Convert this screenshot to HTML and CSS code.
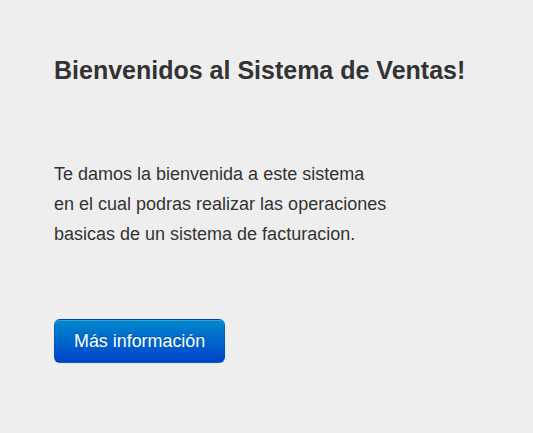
FILE: index.html
```html
<!DOCTYPE html>
<html lang="es">
<head>
<meta charset="utf-8">
<title>Sistema de Ventas</title>
<link rel="stylesheet" href="styles.css">
</head>
<body>
<div class="hero">
  <h1 class="hero-title">Bienvenidos al Sistema de Ventas!</h1>
  <p class="hero-text">Te damos la bienvenida a este sistema<br>en el cual podras realizar las operaciones<br>basicas de un sistema de facturacion.</p>
  <a class="btn-primary" href="#">Más información</a>
</div>
</body>
</html>
```
FILE: styles.css
```css
html, body {
  margin: 0;
  padding: 0;
  background: #eeeeee;
  height: 100%;
}
body {
  font-family: "Liberation Sans", Arial, sans-serif;
  color: #333333;
}
.hero {
  padding: 55px 20px 0 54px;
}
.hero-title {
  margin: 0 0 74px;
  font-size: 25px;
  line-height: 30px;
  font-weight: bold;
  color: #333333;
}
.hero-text {
  margin: 0 0 70px;
  font-size: 18px;
  line-height: 30px;
  color: #333333;
}
.btn-primary {
  display: inline-block;
  padding: 11px 19px;
  font-size: 17.9px;
  line-height: 20px;
  color: #ffffff;
  text-decoration: none;
  text-shadow: 0 -1px 0 rgba(0,0,0,0.25);
  background-color: #006dcc;
  background-image: linear-gradient(to bottom, #0088cc, #0044cc);
  border: 1px solid rgba(0,0,0,0.1);
  border-bottom-color: rgba(0,0,0,0.25);
  border-radius: 6px;
  box-shadow: inset 0 1px 0 rgba(255,255,255,0.2), 0 1px 2px rgba(0,0,0,0.05);
}
```
